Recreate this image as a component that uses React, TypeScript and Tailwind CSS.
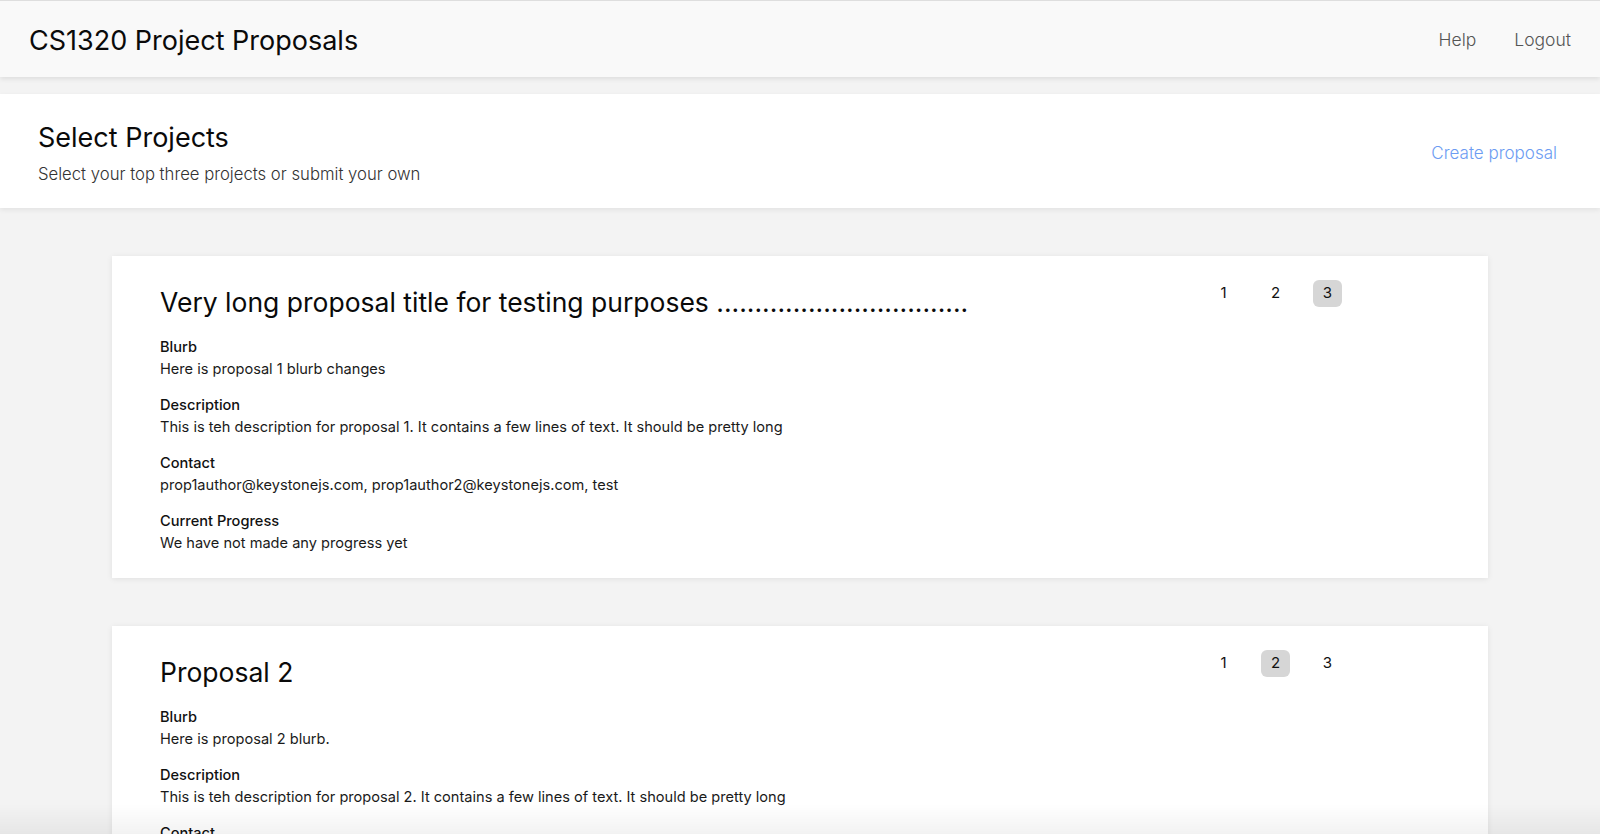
import React, { useState } from "react";

type Proposal = {
  id: number;
  title: string;
  blurb: string;
  description: string;
  contact: string;
  progress: string;
  rank: number;
};

const proposals: Proposal[] = [
  {
    id: 1,
    title: "Very long proposal title for testing purposes .................................",
    blurb: "Here is proposal 1 blurb changes",
    description:
      "This is teh description for proposal 1. It contains a few lines of text. It should be pretty long",
    contact: "prop1author@keystonejs.com, prop1author2@keystonejs.com, test",
    progress: "We have not made any progress yet",
    rank: 3,
  },
  {
    id: 2,
    title: "Proposal 2",
    blurb: "Here is proposal 2 blurb.",
    description:
      "This is teh description for proposal 2. It contains a few lines of text. It should be pretty long",
    contact: "prop2author@keystonejs.com",
    progress: "We have not made any progress yet",
    rank: 2,
  },
];

const Field = ({ label, value }: { label: string; value: string }) => (
  <div>
    <div className="text-[14.6px] leading-[21px] font-medium text-[#111]">{label}</div>
    <div className="text-[14.6px] leading-[23px] text-[#1a1a1a]">{value}</div>
  </div>
);

const ProposalCard = ({ proposal }: { proposal: Proposal }) => {
  const [rank, setRank] = useState<number>(proposal.rank);

  return (
    <article className="bg-white shadow-[0_1px_6px_rgba(0,0,0,0.08)] pl-[48px] pr-[144px] pt-[30px] pb-[23px] flex">
      <div className="flex-1 flex flex-col gap-[14px]">
        <h2 className="text-[26.5px] leading-[32px] text-[#0a0a0a] mb-[5px]">{proposal.title}</h2>
        <Field label="Blurb" value={proposal.blurb} />
        <Field label="Description" value={proposal.description} />
        <Field label="Contact" value={proposal.contact} />
        <Field label="Current Progress" value={proposal.progress} />
      </div>

      {/* rank picker */}
      <div className="flex gap-[23px] h-[27px] -mt-[6px] pr-[2px]">
        {[1, 2, 3].map((n) => (
          <button
            key={n}
            onClick={() => setRank(n)}
            className={`w-[29px] h-[27px] rounded-[6px] text-[15px] text-[#111] flex items-center justify-center ${
              rank === n ? "bg-[#d6d6d6]" : ""
            }`}
          >
            {n}
          </button>
        ))}
      </div>
    </article>
  );
};

export default function App() {
  return (
    <div
      className="min-h-screen bg-[#f3f3f3] text-black"
      style={{ fontFamily: "Inter, 'Noto Sans', sans-serif" }}
    >
      {/* Top bar */}
      <header className="h-[77px] bg-[#f9f9f9] border-t border-[#dedede] shadow-[0_2px_5px_rgba(0,0,0,0.09)] flex items-center justify-between pl-[29px] pr-[29px] relative z-10">
        <h1 className="text-[27px] text-[#0a0a0a] pt-[5px]">CS1320 Project Proposals</h1>
        <nav className="flex gap-[38px] text-[17.5px] font-light text-[#555] pt-[2px]">
          <a href="#">Help</a>
          <a href="#">Logout</a>
        </nav>
      </header>

      {/* Page heading */}
      <section className="mt-[17px] h-[114px] bg-white shadow-[0_2px_5px_rgba(0,0,0,0.07)] flex items-center justify-between pl-[38px] pr-[43px]">
        <div className="pt-[4px]">
          <h2 className="text-[27px] leading-[34px] text-[#0a0a0a]">Select Projects</h2>
          <p className="mt-[7px] text-[16.7px] leading-[24px] font-light text-[#333]">
            Select your top three projects or submit your own
          </p>
        </div>
        <a href="#" className="text-[17px] font-light text-[#6c9cf2] pt-[5px]">
          Create proposal
        </a>
      </section>

      {/* Proposals */}
      <main className="px-[112px] pt-[48px] pb-[48px] flex flex-col gap-[48px]">
        {proposals.map((p) => (
          <ProposalCard key={p.id} proposal={p} />
        ))}
      </main>

      {/* bottom bar shadow */}
      <div className="fixed left-0 right-0 bottom-0 h-[30px] pointer-events-none bg-gradient-to-b from-transparent to-black/[0.05]" />
    </div>
  );
}
